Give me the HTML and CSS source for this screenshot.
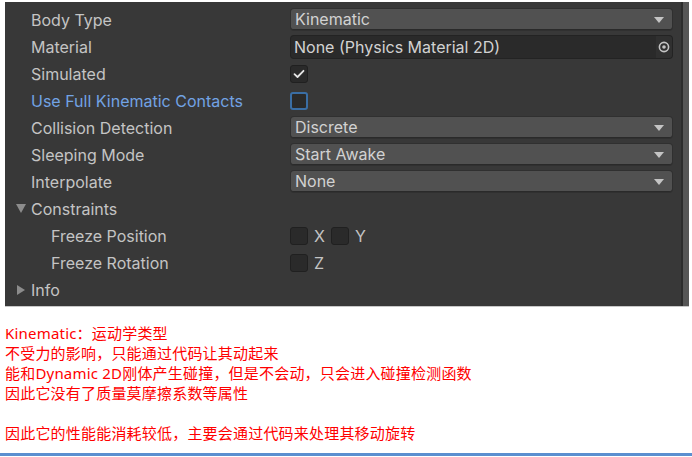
FILE: index.html
```html
<!DOCTYPE html>
<html lang="zh-CN">
<head>
    <meta charset="UTF-8">
    <title>Rigidbody 2D</title>
    <link rel="stylesheet" href="styles.css">
</head>
<body>

    <div class="inspector">
        <div class="fields">
            <div class="row">
                <span class="label">Body Type</span>
                <div class="dropdown">Kinematic<span class="arrow"></span></div>
            </div>
            <div class="row">
                <span class="label">Material</span>
                <div class="objfield">
                    <span class="objname">None (Physics Material 2D)</span>
                    <span class="picker">
                        <svg width="12" height="12" viewBox="0 0 12 12"><circle cx="6" cy="6" r="4.6" fill="none" stroke="#c4c4c4" stroke-width="1.6"/><circle cx="6" cy="6" r="1.8" fill="#c4c4c4"/></svg>
                    </span>
                </div>
            </div>
            <div class="row">
                <span class="label">Simulated</span>
                <span class="check">
                    <svg width="12" height="10" viewBox="0 0 12 10"><path d="M1.5 5.2 L4.5 8 L10.5 1.8" fill="none" stroke="#e4e4e4" stroke-width="1.8" stroke-linecap="round" stroke-linejoin="round"/></svg>
                </span>
            </div>
            <div class="row">
                <span class="label modified">Use Full Kinematic Contacts</span>
                <span class="check focus"></span>
            </div>
            <div class="row">
                <span class="label">Collision Detection</span>
                <div class="dropdown">Discrete<span class="arrow"></span></div>
            </div>
            <div class="row">
                <span class="label">Sleeping Mode</span>
                <div class="dropdown">Start Awake<span class="arrow"></span></div>
            </div>
            <div class="row">
                <span class="label">Interpolate</span>
                <div class="dropdown">None<span class="arrow"></span></div>
            </div>
            <div class="row">
                <span class="label foldout"><span class="tri down"></span>Constraints</span>
            </div>
            <div class="row">
                <span class="label sub">Freeze Position</span>
                <div class="axes">
                    <span class="check"></span><span class="axis">X</span>
                    <span class="check"></span><span class="axis">Y</span>
                </div>
            </div>
            <div class="row">
                <span class="label sub">Freeze Rotation</span>
                <div class="axes">
                    <span class="check"></span><span class="axis">Z</span>
                </div>
            </div>
            <div class="row">
                <span class="label foldout"><span class="tri right"></span>Info</span>
            </div>
        </div>
        <div class="scrollbar"></div>
    </div>

    <div class="notes">
        <p>Kinematic：运动学类型</p>
        <p>不受力的影响，只能通过代码让其动起来</p>
        <p>能和Dynamic 2D刚体产生碰撞，但是不会动，只会进入碰撞检测函数</p>
        <p>因此它没有了质量莫摩擦系数等属性</p>
        <p>&nbsp;</p>
        <p>因此它的性能能消耗较低，主要会通过代码来处理其移动旋转</p>
    </div>

    <div class="rule"></div>

</body>
</html>
```

FILE: styles.css
```css
body {
    margin: 0;
    background-color: #fff;
    font-family: Inter, "Noto Sans", sans-serif;
    overflow: hidden;
}
.inspector {
    display: flex;
    margin: 2px 0 0 5px;
    width: 684px;
    height: 304px;
    background-color: #383838;
    border-bottom: 1px solid #c8c8c8;
}
.fields {
    flex: 1;
    padding-top: 4px;
}
.scrollbar {
    width: 6px;
    border-left: 2px solid #2c2c2c;
    background-color: #565656;
}
.row {
    display: flex;
    align-items: center;
    height: 27px;
}
.label {
    box-sizing: border-box;
    width: 286px;
    padding-left: 26px;
    font-size: 16px;
    color: #c4c4c4;
    white-space: nowrap;
}
.label.modified {
    color: #72a3e4;
}
.label.sub {
    padding-left: 46px;
}
.label.foldout {
    display: flex;
    align-items: center;
    padding-left: 10px;
}
.tri {
    width: 0;
    height: 0;
    margin-right: 5px;
}
.tri.down {
    margin-left: 1px;
    border-left: 5px solid transparent;
    border-right: 5px solid transparent;
    border-top: 9px solid #8c8c8c;
}
.tri.right {
    margin-left: 2px;
    margin-right: 6px;
    border-top: 5px solid transparent;
    border-bottom: 5px solid transparent;
    border-left: 8px solid #8c8c8c;
}
.dropdown {
    position: relative;
    width: 377px;
    height: 20px;
    padding-left: 4px;
    line-height: 20px;
    font-size: 16px;
    color: #d2d2d2;
    background-color: #515151;
    border-radius: 3px;
    border-bottom: 1px solid #2a2a2a;
    box-shadow: 0 0 0 1px #303030;
}
.arrow {
    position: absolute;
    right: 8px;
    top: 8px;
    width: 0;
    height: 0;
    border-left: 5px solid transparent;
    border-right: 5px solid transparent;
    border-top: 6px solid #c4c4c4;
}
.objfield {
    display: flex;
    width: 381px;
    height: 22px;
    background-color: #2a2a2a;
    border-radius: 3px;
    box-shadow: 0 0 0 1px #232323;
}
.objname {
    flex: 1;
    padding-left: 3px;
    line-height: 22px;
    font-size: 16px;
    color: #d2d2d2;
}
.picker {
    display: flex;
    align-items: center;
    justify-content: center;
    width: 16px;
    background-color: #303030;
    border-radius: 0 3px 3px 0;
}
.check {
    display: flex;
    align-items: center;
    justify-content: center;
    box-sizing: border-box;
    width: 18px;
    height: 18px;
    margin-left: -1px;
    background-color: #2a2a2a;
    border: 1px solid #202020;
    border-radius: 3px;
}
.check.focus {
    border: 2px solid #3a6ea5;
}
.axes {
    display: flex;
    align-items: center;
}
.axis {
    width: 24px;
    padding-left: 6px;
    box-sizing: border-box;
    font-size: 16px;
    color: #c4c4c4;
}
.notes {
    margin-top: 16px;
    padding-left: 5px;
    font-family: "Noto Sans", "Noto Sans CJK SC", sans-serif;
    font-size: 15px;
    letter-spacing: 0.2px;
    color: #ff0000;
}
.notes p {
    margin: 0;
    height: 20px;
    line-height: 20px;
}
.rule {
    margin-top: 10px;
    height: 3px;
    background-color: #5b8fd0;
    border-bottom: 1px solid #fff;
    box-shadow: 0 2px 0 #a9d4f2;
}
```
